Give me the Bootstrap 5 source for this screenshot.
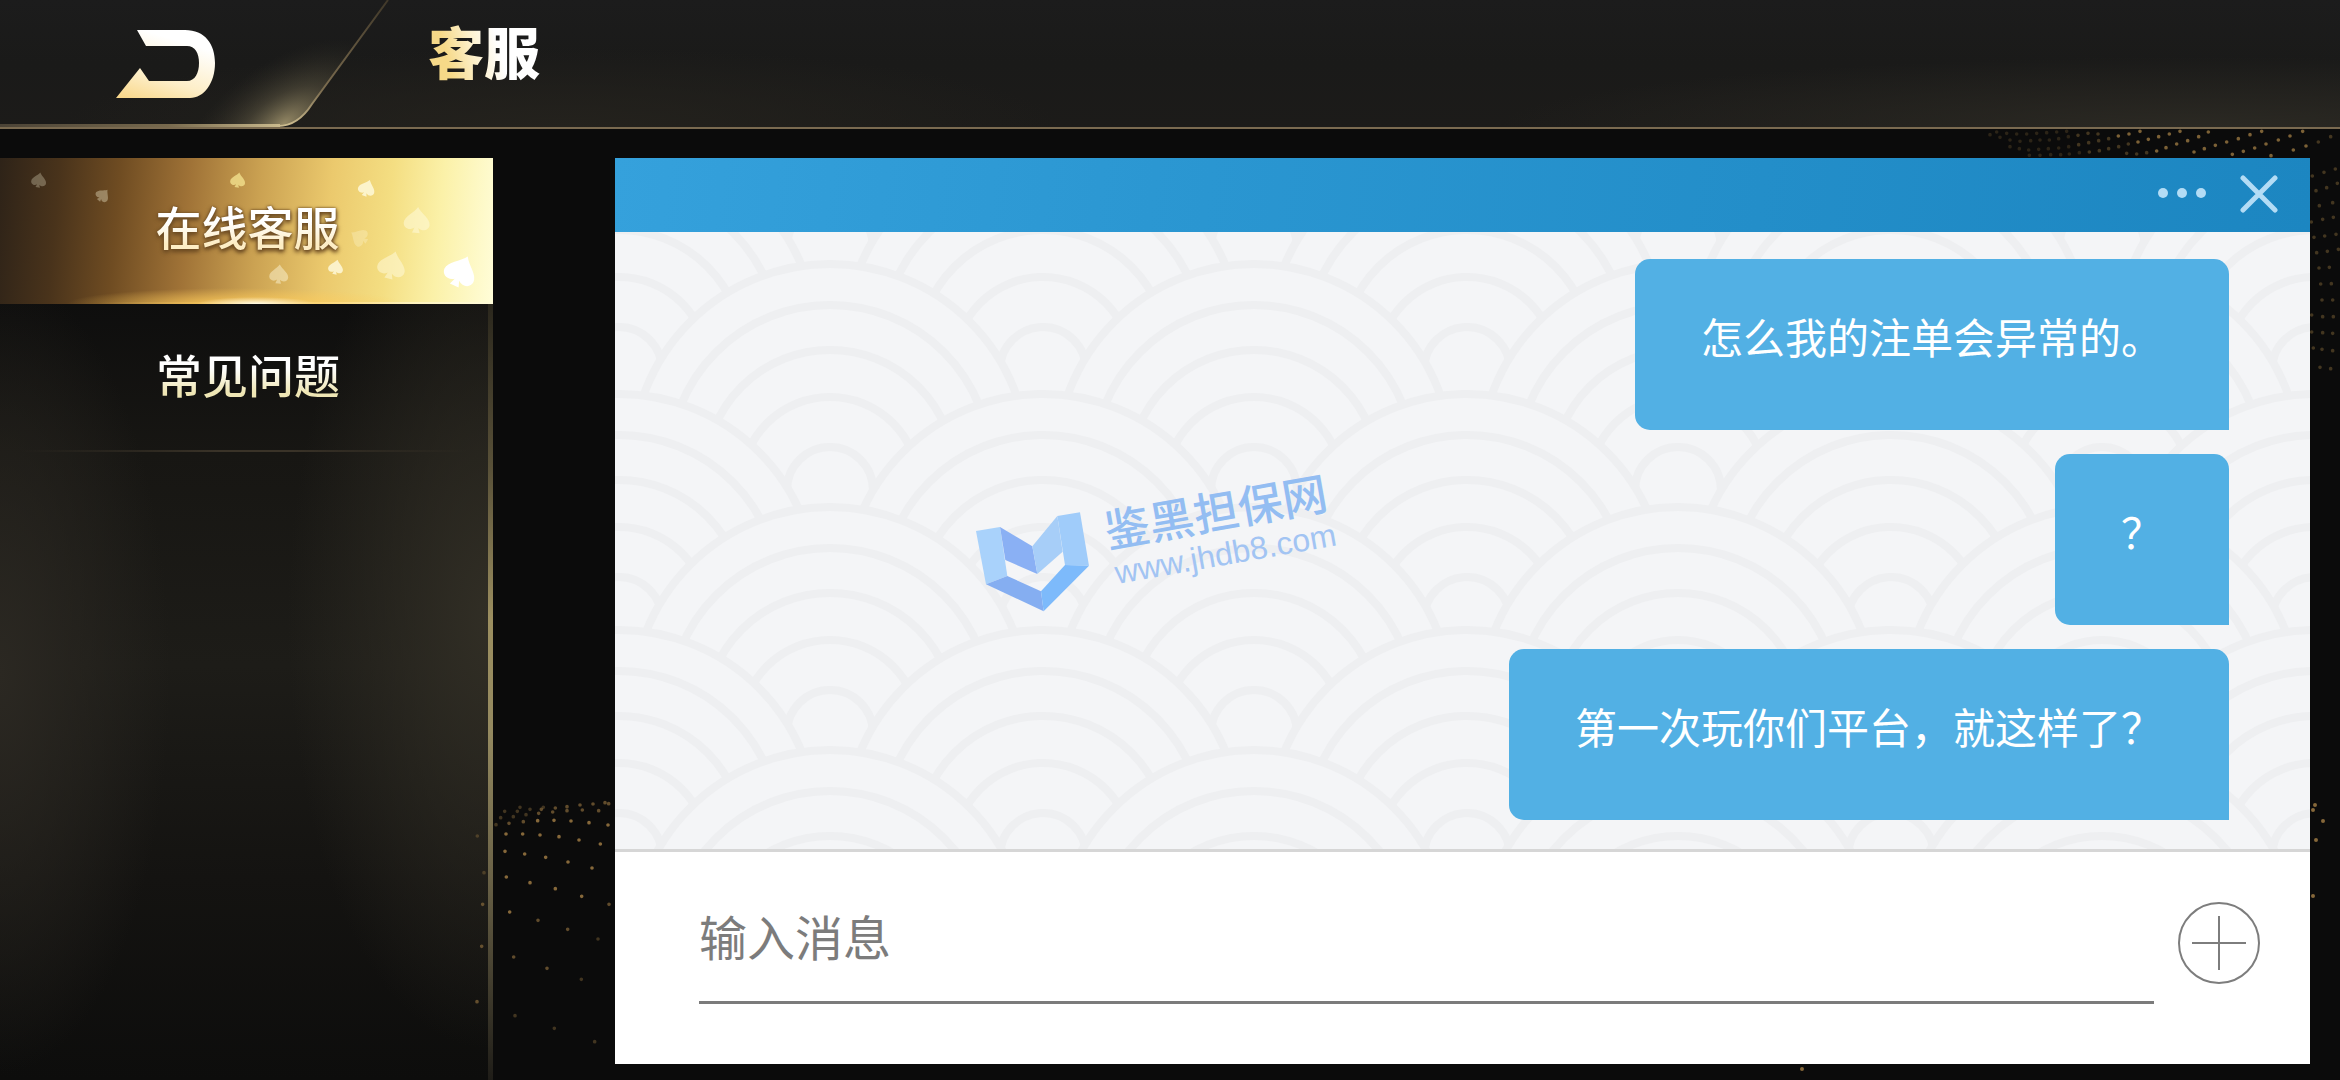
<!DOCTYPE html>
<html lang="zh-CN">
<head>
<meta charset="utf-8">
<meta name="viewport" content="width=device-width, initial-scale=1">
<title>客服</title>
<link href="https://cdn.jsdelivr.net/npm/bootstrap@5.3.0/dist/css/bootstrap.min.css" rel="stylesheet">
<style>
  body { background: #0b0b0b; font-family: "Noto Sans CJK SC", "Noto Sans", sans-serif; }

  /* top bar */
  .topbar {
    height: 129px; border-bottom: 2px solid #7a6a50;
    background:
      radial-gradient(ellipse 700px 70px at 94% 100%, #2b2923 0%, transparent 100%),
      radial-gradient(ellipse 500px 80px at 24% 100%, #24221d 0%, transparent 100%),
      linear-gradient(#1c1c1c, #1a1a19 50%, #1c1b19);
  }
  .tab-edge { left: 0; top: 0; }
  .bare-btn { border: 0; background: none; padding: 0; line-height: 0; }
  .back-btn { width: 392px; height: 127px; z-index: 1; }
  .back-btn svg { margin-left: 116px; }
  .page-title {
    margin: 0 0 28px 36px; font-size: 56px; line-height: 72px; font-weight: 900;
    background: linear-gradient(75deg, #f6d988 20%, #fdf1cd 42%, #fff 62%);
    -webkit-background-clip: text; background-clip: text; color: transparent;
  }

  /* side menu */
  .stage { padding: 29px 30px 0 0; }
  .sidemenu {
    width: 493px; border-right: 5px solid transparent;
    background:
      radial-gradient(ellipse 170px 400px at 0 56%, #2b2822 0%, transparent 100%) padding-box,
      radial-gradient(ellipse 200px 430px at 100% 50%, #312e25 0%, transparent 100%) padding-box,
      linear-gradient(#0c0c0c 12%, #171613 32%, #1d1c18 55%, #141311 78%, #0d0d0c 100%) padding-box,
      linear-gradient(#26231a 14%, #5a5239 34%, #9c8f60 50%, #958a60 62%, #6a6247 78%, #1f1d18 100%) border-box;
  }
  .side-link {
    height: 146px; padding: 0 0 8px 8px; font-size: 46px; line-height: 64px; font-weight: 500;
    text-decoration: none;
  }
  .side-link .side-text {
    background: linear-gradient(#fff 42%, #efe6b4 80%);
    -webkit-background-clip: text; background-clip: text; color: transparent;
  }
  .side-link.on {
    margin-right: -5px;
    padding: 0 0 12px 2px;
    background:
      radial-gradient(ellipse 60px 7px at 52% 100%, #fffbe8 0%, transparent 100%),
      radial-gradient(ellipse 170px 16px at 48% 100%, rgba(255,204,90,.9) 0%, transparent 100%),
      linear-gradient(to right, transparent 20%, rgba(255,220,130,.5) 55%, #fffbd8) bottom / 100% 2px no-repeat,
      linear-gradient(95deg, #2e2318 0%, #49331b 12%, #6f4c22 24%, #a07337 38%, #cba252 52%, #ebc96d 66%, #f4de82 78%, #fbf1a8 88%, #fffdd8 100%);
  }
  .side-link.on .side-text { filter: drop-shadow(0 2px 2px #6b4a22) drop-shadow(0 0 1px #6b4a22); background-image: linear-gradient(#fff 45%, #fdedc4 80%); }
  .side-rule { height: 2px; background: linear-gradient(to right, transparent 4%, #3a3328 45%, #3a3328 60%, transparent 96%); }
  .spades { left: 0; top: 0; }

  .speckle { pointer-events: none; }
  .speckle-left { left: 440px; top: 631px; }
  .speckle-top { right: 0; top: -9px; }
  .speckle-low { right: 0; top: 651px; }

  /* chat window */
  .chatbox { margin: 0 0 16px 122px; z-index: 1; }
  .chat-head { height: 74px; padding-right: 28px; gap: 24px; background: linear-gradient(98deg, #35a1dc, #2a96d1 35%, #1c86c1); }
  .chat-log { background: #f4f5f7; padding: 27px 81px 29px; border-bottom: 3px solid #d6d6d6; }
  .waves, .stamp { pointer-events: none; }
  .stamp { left: 20%; top: 218px; margin-left: -4px; }
  .bubble {
    padding: 45px 66px 62px; font-size: 42px; line-height: 64px; color: #fff;
    background: #52b0e4; border-radius: 15px 15px 0 15px; z-index: 1;
  }
  .bubbles { gap: 24px; }
  .composer { padding: 50px 50px 60px 84px; gap: 24px; }
  .say {
    height: 102px; padding: 0 0 34px; font-size: 48px; line-height: 64px;
    border: 0; border-bottom: 3px solid #7b7b7b; border-radius: 0; color: #333;
  }
  .say:focus { box-shadow: none; border-color: #7b7b7b; }
  .say::placeholder { color: #7c7c7c; opacity: 1; }
</style>
<script src="https://cdn.jsdelivr.net/npm/bootstrap@5.3.0/dist/js/bootstrap.bundle.min.js"></script>
</head>
<body>
<div class="d-flex flex-column min-vh-100 overflow-hidden">

  <header class="topbar d-flex align-items-center position-relative">
    <svg class="tab-edge position-absolute" width="400" height="129" viewBox="0 0 400 129" aria-hidden="true">
      <defs>
        <radialGradient id="tabGlow" gradientUnits="userSpaceOnUse" cx="0" cy="0" r="1" gradientTransform="translate(284 124) rotate(-35) scale(120 62)">
          <stop offset="0" stop-color="#a99b72" stop-opacity=".85"/><stop offset=".45" stop-color="#6f674e" stop-opacity=".4"/><stop offset="1" stop-color="#3a372c" stop-opacity="0"/>
        </radialGradient>
        <linearGradient id="tabLine" gradientUnits="userSpaceOnUse" x1="290" y1="125" x2="388" y2="0">
          <stop offset="0" stop-color="#cbbb8e"/><stop offset=".3" stop-color="#7c6d50"/><stop offset="1" stop-color="#403829"/>
        </linearGradient>
        <linearGradient id="tabBase" x1="0" x2="1" y1="0" y2="0">
          <stop offset="0" stop-color="#4b4336"/><stop offset=".6" stop-color="#77694d"/><stop offset="1" stop-color="#cbbb8e"/>
        </linearGradient>
      </defs>
      <path d="M0 0H388L312 104Q298 126 278 126H0Z" fill="url(#tabGlow)"/>
      <path d="M388 0L312 104Q298 126 278 126" fill="none" stroke="url(#tabLine)" stroke-width="2"/>
      <rect x="0" y="124" width="280" height="3" fill="url(#tabBase)"/>
    </svg>
    <button type="button" class="back-btn bare-btn d-flex align-items-center position-relative" aria-label="返回">
      <svg width="100" height="70" viewBox="116 28 100 70">
        <defs><linearGradient id="gold" x1=".1" y1="1" x2=".5" y2=".1"><stop offset="0" stop-color="#f9d88c"/><stop offset=".4" stop-color="#fdeec8"/><stop offset="1" stop-color="#fff"/></linearGradient></defs>
        <path fill="url(#gold)" d="M137 29H185C205 29 215 43 215 62C215 82 204 97 190 97H116L140 67L149 80H187C195 80 199 72 199 62C199 52 195 45 187 45H146Z"/>
      </svg>
    </button>
    <h1 class="page-title">客服</h1>
  </header>

  <main class="stage d-flex flex-grow-1 position-relative">
    <nav class="sidemenu d-flex flex-column flex-shrink-0" aria-label="客服">
      <a href="#online" class="side-link on d-flex align-items-center justify-content-center position-relative" aria-current="page">
        <svg class="spades position-absolute" width="493" height="146" viewBox="0 0 493 146" aria-hidden="true">
          <defs><path id="spade" d="M0 -10C3 -5 10 -2 10 3C10 7 5 9 1.500 6L3 10H-3L-1.500 6C-5 9 -10 7 -10 3C-10 -2 -3 -5 0 -10Z"/></defs>
          <g fill="#fffbe0">
            <use href="#spade" transform="translate(39 22) rotate(10) scale(.75)" opacity=".28"/>
            <use href="#spade" transform="translate(103 37) rotate(40) scale(.7)" opacity=".35"/>
            <use href="#spade" transform="translate(238 22) rotate(10) scale(.75)" fill="#f5e691" opacity=".75"/>
            <use href="#spade" transform="translate(367 30) rotate(20) scale(.85)" opacity=".8"/>
            <use href="#spade" transform="translate(417 62) rotate(5) scale(1.300)" opacity=".5"/>
            <use href="#spade" transform="translate(359 79) rotate(-60) scale(.9)" opacity=".28"/>
            <use href="#spade" transform="translate(279 116) rotate(5) scale(.95)" opacity=".45"/>
            <use href="#spade" transform="translate(336 109) rotate(12) scale(.75)" opacity=".8"/>
            <use href="#spade" transform="translate(392 107) rotate(15) scale(1.400)" opacity=".5"/>
            <use href="#spade" transform="translate(461 113) rotate(25) scale(1.600)" fill="#fff"/>
          </g>
        </svg>
        <span class="side-text position-relative">在线客服</span>
      </a>
      <a href="#faq" class="side-link d-flex align-items-center justify-content-center"><span class="side-text">常见问题</span></a>
      <div class="side-rule"></div>
    </nav>

    <svg class="speckle speckle-left position-absolute" width="175" height="320" viewBox="0 0 525 960" aria-hidden="true">
      <g fill="none" stroke="#86683a" stroke-width="11" stroke-linecap="round">
        <path opacity=".45" d="M168 194h0M182 173h0M194 154h0M220 170h0M232 154h0M240 142h0M258 164h0M270 148h0M310 142h0M112 228h0M132 338h0M424 658h0M474 537h0M343 805h0M464 845h0M225 767h0"/>
        <path opacity=".7" d="M207 190h0M250 185h0M296 160h0M304 148h0M338 156h0M346 144h0M381 140h0M381 152h0M420 135h0M427 150h0M459 132h0M476 152h0M495 128h0M506 131h0M128 433h0M125 559h0M111 725h0M221 591h0M321 625h0M383 508h0M294 481h0M507 433h0"/>
        <path d="M293 182h0M342 181h0M393 183h0M447 188h0M504 195h0M198 222h0M248 222h0M300 225h0M357 230h0M417 240h0M481 252h0M195 274h0M254 282h0M317 292h0M384 306h0M456 324h0M199 351h0M270 368h0M346 386h0M425 409h0M209 456h0"/>
      </g>
    </svg>
    <svg class="speckle speckle-top position-absolute" width="380" height="320" viewBox="0 0 1140 960" aria-hidden="true">
      <g fill="none" stroke="#7c6136" stroke-width="11" stroke-linecap="round">
        <path opacity=".3" d="M325 50h0M296 56h0M326 80h0M268 60h0M296 84h0M240 60h0M265 86h0M212 62h0M236 88h0M358 98h0M328 102h0M180 64h0M206 90h0M150 60h0M120 52h0M178 86h0M150 80h0M90 44h0M200 42h0M230 40h0M260 38h0M290 36h0M320 34h0M208 106h0M240 106h0M272 104h0M302 104h0M170 42h0M140 40h0M110 36h0"/>
        <path opacity=".5" d="M446 56h0M505 72h0M476 80h0M446 86h0M416 62h0M384 40h0M354 46h0M414 42h0M386 68h0M356 74h0M418 92h0M388 96h0M560 98h0M530 102h0M500 100h0M1055 585h0M1088 590h0M1120 590h0M1055 636h0M1088 638h0M1118 640h0M1060 684h0M1086 688h0M1118 692h0M1080 742h0M1112 746h0M1086 540h0M1118 540h0M1082 492h0M1114 491h0M1077 444h0M1108 442h0M1075 66h0M1112 50h0M1054 306h0M1078 257h0M1118 248h0M1092 157h0M1126 147h0M1057 168h0M1100 203h0M1068 212h0M1132 190h0M1088 298h0M1120 292h0M1062 352h0M1094 348h0M1128 343h0M1070 398h0M1102 394h0M1135 388h0"/>
        <path d="M990 48h0M1028 34h0M1038 78h0M1000 90h0M905 34h0M870 44h0M955 60h0M918 72h0M884 84h0M850 94h0M817 103h0M933 107h0M835 56h0M800 66h0M766 76h0M733 86h0M702 96h0M745 36h0M716 50h0M683 62h0M650 72h0M618 83h0M590 93h0M660 34h0M628 42h0M596 50h0M565 58h0M534 66h0M507 42h0M475 48h0M540 34h0"/>
      </g>
    </svg>
    <svg class="speckle speckle-low position-absolute" width="600" height="300" viewBox="0 0 600 300" aria-hidden="true">
      <path fill="none" stroke="#86683a" stroke-width="4" stroke-linecap="round" d="M575 25h0M573 30h0M583 41h0M576 60h0M573 116h0M62 289h0"/>
    </svg>

    <section class="chatbox d-flex flex-column flex-grow-1 position-relative bg-white" aria-label="在线客服">
      <div class="chat-head d-flex align-items-center justify-content-end">
        <button type="button" class="bare-btn" aria-label="更多">
          <svg width="60" height="40" viewBox="0 0 60 40" fill="#b3dcf5"><circle cx="11" cy="18" r="5"/><circle cx="30" cy="18" r="5"/><circle cx="49" cy="18" r="5"/></svg>
        </button>
        <button type="button" class="bare-btn" aria-label="关闭">
          <svg width="46" height="40" viewBox="0 0 46 40" fill="none" stroke="#b3dcf5" stroke-width="5" stroke-linecap="round"><path d="M7 3L39 35M39 3L7 35"/></svg>
        </button>
      </div>

      <div class="chat-log flex-grow-1 position-relative overflow-hidden">
        <svg class="waves position-absolute top-0 start-0 w-100 h-100" aria-hidden="true">
          <defs>
            <g id="fan" fill="#f4f5f7" stroke="#eeeff1" stroke-width="8">
              <circle cy="202" r="198"/><circle cy="206" r="161"/><circle cy="215" r="125"/><circle cy="226" r="89"/><circle cy="230" r="43"/>
            </g>
            <pattern id="seigaiha" width="424" height="486" patternUnits="userSpaceOnUse">
              <use href="#fan" x="4" y="-328"/><use href="#fan" x="428" y="-328"/>
              <use href="#fan" x="215" y="-215"/>
              <use href="#fan" x="4" y="-92"/><use href="#fan" x="428" y="-92"/>
              <use href="#fan" x="215" y="28"/>
              <use href="#fan" x="4" y="158"/><use href="#fan" x="428" y="158"/>
              <use href="#fan" x="215" y="271"/>
              <use href="#fan" x="4" y="394"/><use href="#fan" x="428" y="394"/>
            </pattern>
          </defs>
          <rect width="100%" height="100%" fill="url(#seigaiha)"/>
        </svg>

        <svg class="stamp position-absolute" width="420" height="180" viewBox="0 0 420 180">
          <g transform="scale(.3333)">
            <path fill="#a9d2fb" d="M78 243L150 231L172 378L108 403Z"/>
            <path fill="#8ab0f4" d="M150 231L247 289L262 372L166 330Z"/>
            <path fill="#a7cef8" d="M247 289L322 198L338 305L262 372Z"/>
            <path fill="#a0ccfa" d="M322 198L390 187L417 347L345 345Z"/>
            <path fill="#85aef1" d="M108 403L172 378L273 424L281 484Z"/>
            <path fill="#7dbafb" d="M273 424L345 345L417 347L281 484Z"/>
          </g>
          <g font-family="'Noto Sans CJK SC', sans-serif" font-size="45" font-weight="500" fill="#93bdf2"><text transform="translate(158 98) rotate(-10)">鉴黑担保网</text></g>
          <g font-family="'Liberation Sans', sans-serif" font-size="32" fill="#a2c4f3"><text transform="translate(167 134) rotate(-10)">www.jhdb8.com</text></g>
        </svg>

        <div class="bubbles d-flex flex-column align-items-end">
          <div class="bubble position-relative">怎么我的注单会异常的。</div>
          <div class="bubble position-relative">？</div>
          <div class="bubble position-relative">第一次玩你们平台，就这样了？</div>
        </div>
      </div>

      <form class="composer d-flex align-items-start">
        <input type="text" class="say form-control bg-transparent" placeholder="输入消息" aria-label="输入消息">
        <button type="button" class="bare-btn" aria-label="添加附件">
          <svg width="82" height="82" viewBox="0 0 82 82" fill="none" stroke="#7d7d7d" stroke-width="2"><circle cx="41" cy="41" r="40"/><path d="M14 41H68M41 14V68"/></svg>
        </button>
      </form>
    </section>
  </main>
</div>
</body>
</html>
